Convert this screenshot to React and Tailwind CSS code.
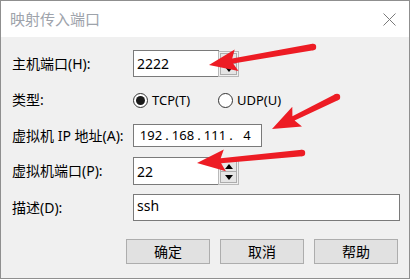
import React from "react";

const font = { fontFamily: '"Noto Sans", "Noto Sans CJK SC", sans-serif' };

function arrowPoints(tx, ty, sx, sy) {
  const len = Math.hypot(sx - tx, sy - ty);
  const ux = (sx - tx) / len;
  const uy = (sy - ty) / len;
  const nx = -uy;
  const ny = ux;
  const head = 24;
  const hw = 11;
  const at = (d, w) => [tx + ux * d + nx * w, ty + uy * d + ny * w];
  const pts = [
    [tx, ty],
    at(head + 4, hw),
    at(head, 2.5),
    at(len, 3.2),
    at(len, -3.2),
    at(head, -2.5),
    at(head + 4, -hw),
  ];
  return pts.map((p) => p.map((v) => v.toFixed(1)).join(",")).join(" ");
}

function Arrow({ tip, tail }) {
  return (
    <>
      <polygon points={arrowPoints(tip[0], tip[1], tail[0], tail[1])} fill="#ed1c24" />
      <circle cx={tail[0]} cy={tail[1]} r="3.2" fill="#ed1c24" />
    </>
  );
}

function Spinner({ h }) {
  return (
    <div className={`-ml-px flex w-[21px] flex-col justify-center gap-0 border border-[#b9b9b9] bg-[#f0f0f0] px-px ${h}`}>
      <div className="flex h-[11px] items-center justify-center border border-[#adadad] bg-[#e5e5e5]">
        <svg width="8" height="5" viewBox="0 0 8 5">
          <polygon points="0,5 8,5 4,0" fill="#000" />
        </svg>
      </div>
      <div className="flex h-[11px] items-center justify-center border border-[#adadad] border-t-0 bg-[#e5e5e5]">
        <svg width="8" height="5" viewBox="0 0 8 5">
          <polygon points="0,0 8,0 4,5" fill="#000" />
        </svg>
      </div>
    </div>
  );
}

function Label({ children }) {
  return <div className="w-[121px] shrink-0 text-[14px] leading-[18px] text-black">{children}</div>;
}

function Radio({ checked, label }) {
  return (
    <div className="flex items-center gap-[4px]">
      <div className="flex h-[15px] w-[15px] items-center justify-center rounded-full border border-[#333] bg-white">
        {checked && <div className="h-[9px] w-[9px] rounded-full bg-[#1a1a1a]" />}
      </div>
      <span className="text-[13px] leading-[16px] text-black">{label}</span>
    </div>
  );
}

function IpField({ parts }) {
  return (
    <div className="flex h-[23px] w-[129px] items-center border border-[#7a7a7a] bg-white pl-[5px] text-[13px] text-black">
      {parts.map((p, i) => (
        <React.Fragment key={i}>
          {i > 0 && <span className="w-[8px] text-center">.</span>}
          <span className="w-[24px] text-center">{p}</span>
        </React.Fragment>
      ))}
    </div>
  );
}

export default function App() {
  return (
    <div className="relative h-[279px] w-[411px] bg-white" style={font}>
      <div className="flex h-[279px] w-[410px] flex-col border border-[#8f8f8f]">
        <div className="flex h-[36px] items-center justify-between bg-white pl-[9px] pr-[13px]">
          <span className="text-[15px] leading-[18px] text-[#9ea3ab]">映射传入端口</span>
          <svg width="13" height="13" viewBox="0 0 13 13">
            <path d="M0.5 0.5 L12.5 12.5 M12.5 0.5 L0.5 12.5" stroke="#7a7a7a" strokeWidth="1" />
          </svg>
        </div>

        <div className="flex flex-1 flex-col bg-[#f0f0f0] pl-[11px] pr-[9px]">
          <div className="mt-[13px] flex h-[27px] items-center">
            <Label>主机端口(H):</Label>
            <div className="flex h-[27px] w-[86px] items-center border border-[#7a7a7a] bg-white pl-[3px] text-[14px] text-black">
              2222
            </div>
            <Spinner h="h-[26px] mt-px" />
          </div>

          <div className="mt-[15px] flex h-[16px] items-center">
            <Label>类型:</Label>
            <div className="w-[85px]">
              <Radio checked label="TCP(T)" />
            </div>
            <Radio label="UDP(U)" />
          </div>

          <div className="mt-[16px] flex h-[23px] items-center">
            <Label>虚拟机 IP 地址(A):</Label>
            <IpField parts={["192", "168", "111", "4"]} />
          </div>

          <div className="mt-[10px] flex h-[28px] items-center">
            <Label>虚拟机端口(P):</Label>
            <div className="flex h-[28px] w-[86px] items-center border border-[#7a7a7a] bg-white pl-[3px] text-[14px] text-black">
              22
            </div>
            <Spinner h="h-[25px] mt-[2px]" />
          </div>

          <div className="mt-[9px] flex h-[27px] items-center">
            <Label>描述(D):</Label>
            <div className="flex h-[27px] flex-1 items-start border border-[#7a7a7a] bg-white pl-[3px] pt-[2px] text-[14px] leading-[18px] text-black">
              ssh
            </div>
          </div>

          <div className="mt-[18px] flex h-[25px] gap-[10px] pl-[114px]">
            {["确定", "取消", "帮助"].map((t) => (
              <div
                key={t}
                className="flex h-[25px] w-[84px] items-center justify-center border border-[#adadad] bg-[#e1e1e1] text-[14px] text-black"
              >
                {t}
              </div>
            ))}
          </div>
        </div>
      </div>

      <svg className="pointer-events-none absolute left-0 top-0" width="411" height="279">
        <Arrow tip={[209, 65]} tail={[313, 47]} />
        <Arrow tip={[272, 129]} tail={[337, 97]} />
        <Arrow tip={[197, 163]} tail={[302, 153]} />
      </svg>
    </div>
  );
}
